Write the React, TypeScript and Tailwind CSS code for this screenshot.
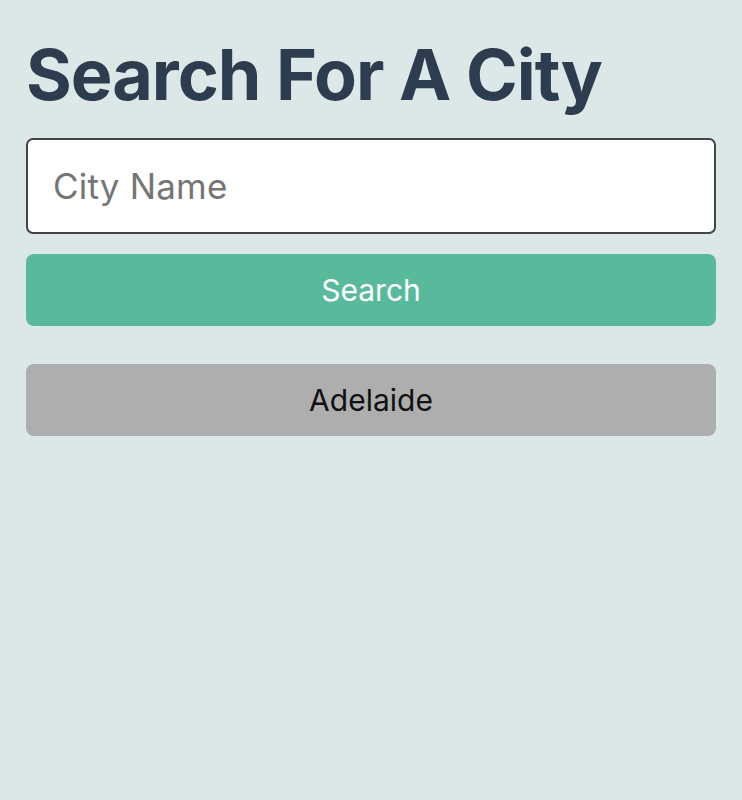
export default function App() {
  return (
    <div className="min-h-[800px] w-full bg-[#dce7e7] px-[26px] pt-[30px]" style={{ fontFamily: 'Inter, "Noto Sans", sans-serif' }}>
      <h1 className="text-[70px] font-bold leading-[90px] tracking-[-1px] text-[#2d3c4e]">Search For A City</h1>
      <input
        type="text"
        placeholder="City Name"
        className="mt-[18px] block h-[96px] w-full rounded-[7px] border-2 border-[#444] bg-white px-[25px] text-[35px] tracking-[0.2px] text-[#222] placeholder:text-[#757575] outline-none"
      />
      <button className="mt-[20px] flex h-[72px] w-full items-center justify-center rounded-[8px] bg-[#59ba9b] text-[30px] text-white">
        Search
      </button>
      <button className="mt-[38px] flex h-[72px] w-full items-center justify-center rounded-[8px] bg-[#aeaeae] text-[30px] text-[#111]">
        Adelaide
      </button>
    </div>
  );
}
